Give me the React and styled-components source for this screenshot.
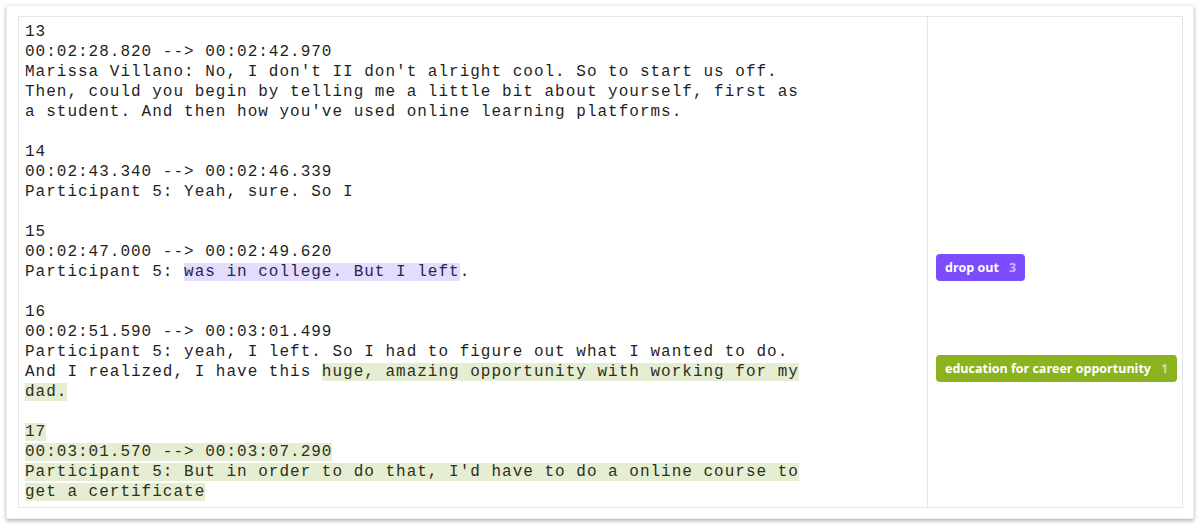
import React from "react";
import styled, { createGlobalStyle } from "styled-components";

const GlobalStyle = createGlobalStyle`
  html, body {
    margin: 0;
    background: #ffffff;
  }
`;

const segments = [
  {
    id: 13,
    range: "00:02:28.820 --> 00:02:42.970",
    parts: [
      {
        text:
          "Marissa Villano: No, I don't II don't alright cool. So to start us off. Then, could you begin by telling me a little bit about yourself, first as a student. And then how you've used online learning platforms.",
      },
    ],
  },
  {
    id: 14,
    range: "00:02:43.340 --> 00:02:46.339",
    parts: [{ text: "Participant 5: Yeah, sure. So I" }],
  },
  {
    id: 15,
    range: "00:02:47.000 --> 00:02:49.620",
    parts: [
      { text: "Participant 5: " },
      { text: "was in college. But I left", mark: "purple" },
      { text: "." },
    ],
  },
];

const tags = [
  { label: "drop out", count: 3, color: "#7c4dfd", top: 237 },
  { label: "education for career opportunity", count: 1, color: "#8bb31f", top: 338 },
];

const Page = () => (
  <Wrapper>
    <GlobalStyle />
    <Card>
      <Frame>
        <TranscriptColumn>
          <Transcript>
            {segments.map((s) => (
              <React.Fragment key={s.id}>
                {s.id}
                {"\n"}
                {s.range}
                {"\n"}
                {s.parts.map((p, i) =>
                  p.mark ? (
                    <Mark key={i} tone={p.mark}>
                      {p.text}
                    </Mark>
                  ) : (
                    <React.Fragment key={i}>{p.text}</React.Fragment>
                  )
                )}
                {"\n\n"}
              </React.Fragment>
            ))}
            {"16\n00:02:51.590 --> 00:03:01.499\nParticipant 5: yeah, I left. So I had to figure out what I wanted to do. And I realized, I have this "}
            <Mark tone="green">
              {"huge, amazing opportunity with working for my dad.\n\n17\n00:03:01.570 --> 00:03:07.290\nParticipant 5: But in order to do that, I'd have to do a online course to get a certificate"}
            </Mark>
          </Transcript>
        </TranscriptColumn>
        <TagColumn>
          {tags.map((t) => (
            <Tag key={t.label} color={t.color} style={{ top: t.top }}>
              {t.label}
              <Count>{t.count}</Count>
            </Tag>
          ))}
        </TagColumn>
      </Frame>
    </Card>
  </Wrapper>
);

export default function App() {
  return <Page />;
}

const Wrapper = styled.div`
  padding: 5px 6px;
`;

const Card = styled.div`
  width: 1188px;
  box-sizing: border-box;
  padding: 10px 10px 10px 11px;
  background: #fff;
  border: 1px solid #ececec;
  box-shadow: 0 2px 4px rgba(0, 0, 0, 0.28);
`;

const Frame = styled.div`
  display: grid;
  grid-template-columns: 909px 1fr;
  border: 1px solid #e6e6e6;
`;

const TranscriptColumn = styled.div`
  padding: 5px 6px 5px 6px;
  border-right: 1px solid #e6e6e6;
`;

const Transcript = styled.div`
  width: 786px;
  white-space: pre-line;
  font-family: "Liberation Mono", monospace;
  font-size: 16px;
  letter-spacing: 1px;
  line-height: 20px;
  color: #1f1f1f;
`;

const Mark = styled.span`
  background: ${(p) => (p.tone === "purple" ? "#e3dcfd" : "#e5eed3")};
  color: ${(p) => (p.tone === "purple" ? "#2a2550" : "#2c3020")};
`;

const TagColumn = styled.div`
  position: relative;
`;

const Tag = styled.div`
  position: absolute;
  left: 8px;
  display: flex;
  align-items: center;
  gap: 10px;
  height: 27px;
  padding: 0 9px;
  border-radius: 4px;
  background: ${(p) => p.color};
  color: #fff;
  font-family: "Open Sans", sans-serif;
  font-weight: 700;
  font-size: 12.5px;
  white-space: nowrap;
`;

const Count = styled.span`
  color: rgba(255, 255, 255, 0.6);
`;
